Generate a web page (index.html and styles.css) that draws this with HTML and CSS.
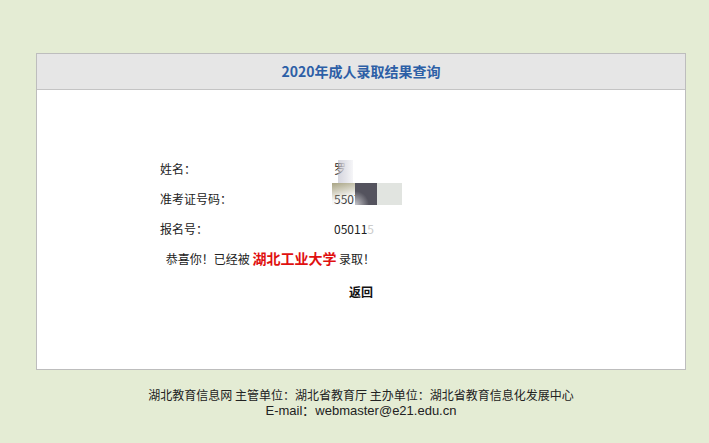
FILE: index.html
```html
<!DOCTYPE html>
<html lang="zh-CN">
<head>
    <meta charset="UTF-8">
    <title>2020年成人录取结果查询</title>
    <link rel="stylesheet" href="styles.css">
</head>
<body>
    <div class="wrap">
        <div class="box">
            <div class="head">2020年成人录取结果查询</div>
            <div class="content">
                <table class="result">
                    <tr>
                        <td class="label">姓名：</td>
                        <td class="value">罗<span class="mask mask-name"></span></td>
                    </tr>
                    <tr>
                        <td class="label">准考证号码：</td>
                        <td class="value">55070<span class="mask mask-a"></span><span class="mask mask-b"></span><span class="mask mask-c"></span></td>
                    </tr>
                    <tr>
                        <td class="label">报名号：</td>
                        <td class="value">05011<span class="fade">5</span></td>
                    </tr>
                    <tr>
                        <td class="msg" colspan="2">&nbsp;恭喜你！已经被 <span class="school">湖北工业大学</span> 录取！</td>
                    </tr>
                </table>
                <div class="back"><a href="#">返回</a></div>
            </div>
        </div>
        <div class="footer">
            <div>湖北教育信息网 主管单位：湖北省教育厅 主办单位：湖北省教育信息化发展中心</div>
            <div class="mail">E-mail：webmaster@e21.edu.cn</div>
        </div>
    </div>
</body>
</html>
```

FILE: styles.css
```css
body {
    margin: 0;
    background-color: #e4ecd4;
    font-family: "Noto Sans CJK SC", "Noto Sans", sans-serif;
    font-size: 12px;
    color: #222;
}
.wrap {
    width: 650px;
    margin: 53px 0 0 36px;
}
.box {
    background-color: #fff;
    border: 1px solid #bdbdbd;
    height: 315px;
}
.head {
    height: 35px;
    line-height: 35px;
    background-color: #e6e6e6;
    border-bottom: 1px solid #c4c4c4;
    text-align: center;
    font-size: 14px;
    font-weight: bold;
    color: #2d5fa6;
}
.content {
    padding-top: 63px;
}
.result {
    border-collapse: collapse;
    margin-left: 123px;
}
.result td {
    height: 30px;
    padding: 0;
}
.label {
    width: 174px;
}
.value {
    position: relative;
}
.mask {
    position: absolute;
}
.mask-name {
    left: 4px;
    top: 7px;
    width: 15px;
    height: 23px;
    background: linear-gradient(90deg, rgba(180, 180, 195, 0.55), rgba(228, 228, 234, 0.95) 55%, #f6f6f8);
}
.mask-a {
    left: -2px;
    top: 0;
    width: 23px;
    height: 22px;
    background: linear-gradient(165deg, rgba(160, 155, 120, 0.85) 5%, rgba(225, 225, 220, 0.25) 65%, rgba(255, 255, 255, 0) 100%);
}
.mask-b {
    left: 21px;
    top: 0;
    width: 22px;
    height: 22px;
    background: radial-gradient(circle at 0 100%, #c8c8cc 0, #54535e 45%);
}
.mask-c {
    left: 43px;
    top: 0;
    width: 25px;
    height: 22px;
    background-color: #e1e4e0;
}
.fade {
    color: #ccc;
}
.msg {
    padding-left: 3px !important;
}
.school {
    color: #e01010;
    font-size: 14px;
    font-weight: bold;
}
.back {
    text-align: center;
    padding-top: 10px;
}
.back a {
    color: #111;
    font-weight: bold;
    text-decoration: none;
}
.footer {
    text-align: center;
    line-height: 16px;
    padding-top: 17px;
    color: #222;
}
.mail {
    font-family: "Liberation Sans", sans-serif;
    font-size: 13px;
}
```
